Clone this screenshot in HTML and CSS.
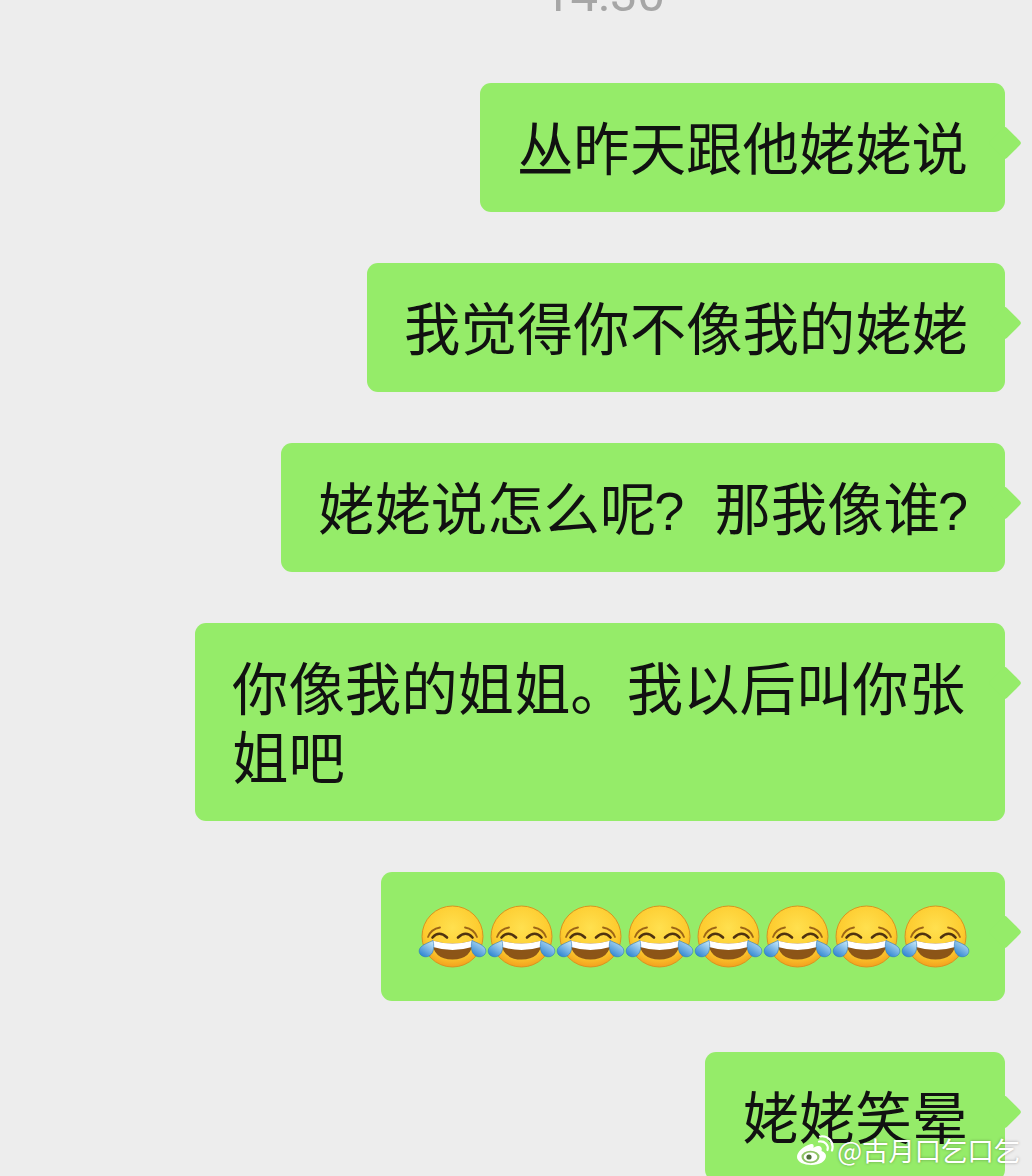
FILE: index.html
```html
<!DOCTYPE html>
<html lang="zh-CN">

<head>
  <meta charset="UTF-8">
  <title>聊天记录</title>
  <link rel="stylesheet" href="styles.css">
</head>

<body>

  <svg class="defs" width="0" height="0">
    <defs>
      <radialGradient id="faceFill" cx="50%" cy="36%" r="64%">
        <stop offset="0" stop-color="#ffe04f"/>
        <stop offset="0.72" stop-color="#fdcb2e"/>
        <stop offset="1" stop-color="#f3a11e"/>
      </radialGradient>
      <linearGradient id="tearFill" x1="0.8" y1="0" x2="0.2" y2="1">
        <stop offset="0" stop-color="#c2e5f8"/>
        <stop offset="1" stop-color="#2a82d0"/>
      </linearGradient>
      <symbol id="laugh" viewBox="0 0 69 66">
        <circle cx="34.500" cy="32.500" r="30.500" fill="url(#faceFill)" stroke="#d9941f" stroke-width="1"/>
        <path d="M10 33 Q13 25 22 23.500" fill="none" stroke="#9c6516" stroke-width="1.800" stroke-linecap="round"/>
        <path d="M59 33 Q56 25 47 23.500" fill="none" stroke="#9c6516" stroke-width="1.800" stroke-linecap="round"/>
        <path d="M14.500 33.500 Q21 26 29 33.500" fill="none" stroke="#4f3310" stroke-width="2.600" stroke-linecap="round"/>
        <path d="M40 33.500 Q48 26 54.500 33.500" fill="none" stroke="#4f3310" stroke-width="2.600" stroke-linecap="round"/>
        <path d="M14 36.500 Q34.500 42.500 55 36.500 Q54 55.500 34.500 55.500 Q15 55.500 14 36.500Z" fill="#8c5517"/>
        <path d="M14 36.500 Q34.500 42.500 55 36.500 Q55 40 54 43 Q34.500 49 15 43 Q14 40 14 36.500Z" fill="#fff"/>
        <path d="M15 36.500 C16 41 16 44 15 47 C13.500 52 9 53.500 5.500 52.500 C1 51 0 46.500 2.500 43.500 C5.500 40 11 38.500 15 36.500Z" fill="url(#tearFill)" stroke="#2a78bd" stroke-width="0.600"/>
        <path d="M54 36.500 C53 41 53 44 54 47 C55.500 52 60 53.500 63.500 52.500 C68 51 69 46.500 66.500 43.500 C63.500 40 58 38.500 54 36.500Z" fill="url(#tearFill)" stroke="#2a78bd" stroke-width="0.600"/>
      </symbol>
    </defs>
  </svg>

  <div class="chat">
    <div class="time"><span>14:30</span></div>

    <div class="bubble">丛昨天跟他姥姥说</div>
    <div class="bubble">我觉得你不像我的姥姥</div>
    <div class="bubble">姥姥说怎么呢<span class="qm qm-gap">?</span>那我像谁<span class="qm">?</span></div>
    <div class="bubble">你像我的姐姐。我以后叫你张姐吧</div>
    <div class="bubble">
      <div class="emoji-row">
        <svg class="emoji"><use href="#laugh"/></svg>
        <svg class="emoji"><use href="#laugh"/></svg>
        <svg class="emoji"><use href="#laugh"/></svg>
        <svg class="emoji"><use href="#laugh"/></svg>
        <svg class="emoji"><use href="#laugh"/></svg>
        <svg class="emoji"><use href="#laugh"/></svg>
        <svg class="emoji"><use href="#laugh"/></svg>
        <svg class="emoji"><use href="#laugh"/></svg>
      </div>
    </div>
    <div class="bubble">姥姥笑晕</div>
  </div>

  <div class="watermark">
    <svg class="weibo" viewBox="0 0 38 30">
      <path d="M15 9 C7 11 1 17 1 22 C1 27 8 30 15.500 30 C24 30 30 26 30 21 C30 18.500 28 17 25.500 16 C26.500 13 25 11 22 11 C20 11 18.500 12 17.500 13 C18 10 17.500 8.500 15 9Z" fill="#fff"/>
      <ellipse cx="14.500" cy="22" rx="9" ry="6.200" fill="#8fc566"/>
      <ellipse cx="14.500" cy="22" rx="6.800" ry="4.600" fill="#fff"/>
      <circle cx="13" cy="22" r="2.600" fill="#4d6b3a"/>
      <path d="M23 6.500 C28.500 5.500 33 10 31.500 15" fill="none" stroke="#fff" stroke-width="2.200" stroke-linecap="round"/>
      <path d="M24 1.500 C32 0 38.500 7 36 15.500" fill="none" stroke="#fff" stroke-width="2.200" stroke-linecap="round"/>
    </svg>
    <span class="handle">@古月口乞口乞</span>
  </div>

</body>

</html>
```

FILE: styles.css
```css
html,
body {
  margin: 0;
  height: 1176px;
  overflow: hidden;
}

body {
  position: relative;
  background: #ededed;
  font-family: "Noto Sans CJK SC", "Noto Sans", sans-serif;
  color: #111;
}

.defs {
  position: absolute;
}

.chat {
  display: flex;
  flex-direction: column;
  align-items: flex-end;
  gap: 51px;
  padding-right: 27px;
}

.time {
  align-self: stretch;
  height: 32px;
  margin-right: -27px;
  overflow: hidden;
  display: flex;
  justify-content: center;
  align-items: flex-start;
  padding-left: 176px;
  color: #a6a6a6;
  font-family: "Roboto", sans-serif;
  font-size: 49px;
  line-height: 32px;
}

.time span {
  margin-top: -21px;
}

.bubble {
  position: relative;
  box-sizing: border-box;
  max-width: 810px;
  min-height: 129px;
  padding: 28px 37px 32px;
  background: #95ec69;
  border-radius: 11px;
  font-size: 56.4px;
  line-height: 69px;
}

.bubble::after {
  content: "";
  position: absolute;
  top: 48px;
  right: -12px;
  width: 24px;
  height: 24px;
  background: #95ec69;
  border-radius: 3px;
  transform: rotate(45deg);
}

.qm {
  margin-left: -2px;
  font-family: "Liberation Sans", sans-serif;
  font-size: 54px;
  line-height: 1;
}

.qm-gap {
  margin-right: 30px;
}

.emoji-row {
  display: flex;
  height: 69px;
  align-items: center;
  margin-top: 2px;
  margin-bottom: -2px;
  margin-right: -2px;
}

.emoji {
  width: 69px;
  height: 66px;
  flex: none;
}

.watermark {
  position: absolute;
  right: 12px;
  bottom: 10px;
  display: flex;
  align-items: center;
  gap: 3px;
  color: #fff;
  text-shadow: 0 0 3px rgba(0, 0, 0, 0.35);
}

.weibo {
  width: 38px;
  height: 30px;
}

.handle {
  font-size: 26.3px;
  line-height: 32px;
  white-space: nowrap;
}
```
